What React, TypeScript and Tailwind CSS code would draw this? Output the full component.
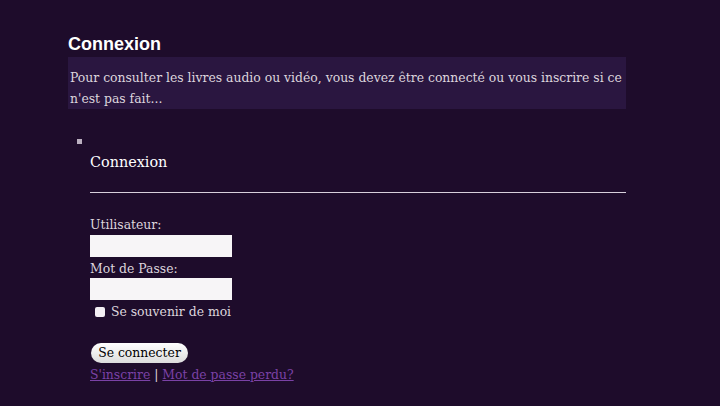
import React from 'react'

export default function App() {
  return (
    <div className="min-h-[406px] w-full bg-[#1e0c2b] text-[#ddd5dd]" style={{ fontFamily: '"DejaVu Serif", Georgia, "Liberation Serif", serif' }}>
      <div className="ml-[68px] w-[558px] pt-[34px]">
        <h2 className="text-[18px] font-bold leading-[20px] text-white" style={{ fontFamily: '"Liberation Sans", Arial, sans-serif' }}>
          Connexion
        </h2>
        <div className="mt-[3px] bg-[#2a1640] px-[2px] pt-[10px] text-[12.4px] leading-[21px]">
          Pour consulter les livres audio ou vidéo, vous devez être connecté ou vous inscrire si ce n'est pas fait...
        </div>

        <ul className="mt-[28px] list-none">
          <li className="relative pl-[22px]">
            <span className="absolute left-[9px] top-[2px] h-[5px] w-[5px] bg-[#bbb0c0]" />
            <div className="pt-[15px]">
              <h3 className="text-[14.4px] leading-[20px] text-white">Connexion</h3>
              <div className="mt-[20px] h-px bg-[#d8d0dc]" />
              <form className="mt-[23px] text-[12.4px] leading-[18px]" onSubmit={(e) => e.preventDefault()}>
                <label className="block">Utilisateur:</label>
                <input type="text" className="mt-[1px] block h-[22px] w-[142px] bg-[#f7f5f7] outline-none" />
                <label className="mt-[3px] block">Mot de Passe:</label>
                <input type="password" className="block h-[22px] w-[142px] bg-[#f7f5f7] outline-none" />
                <label className="mt-[3px] flex items-center gap-[6px] pl-[5px]">
                  <span className="inline-block h-[10px] w-[10px] rounded-[2px] bg-[#f2eef2]" />
                  Se souvenir de moi
                </label>
                <button type="submit" className="ml-px mt-[22px] block h-[20px] w-[97px] rounded-full bg-gradient-to-b from-white to-[#dcdcdc] text-[12.4px] leading-[20px] text-black">
                  Se connecter
                </button>
                <div className="mt-[3px]">
                  <a href="#" className="text-[#7b42a6] underline">S'inscrire</a>
                  {' | '}
                  <a href="#" className="text-[#7b42a6] underline">Mot de passe perdu?</a>
                </div>
              </form>
            </div>
          </li>
        </ul>
      </div>
    </div>
  )
}
